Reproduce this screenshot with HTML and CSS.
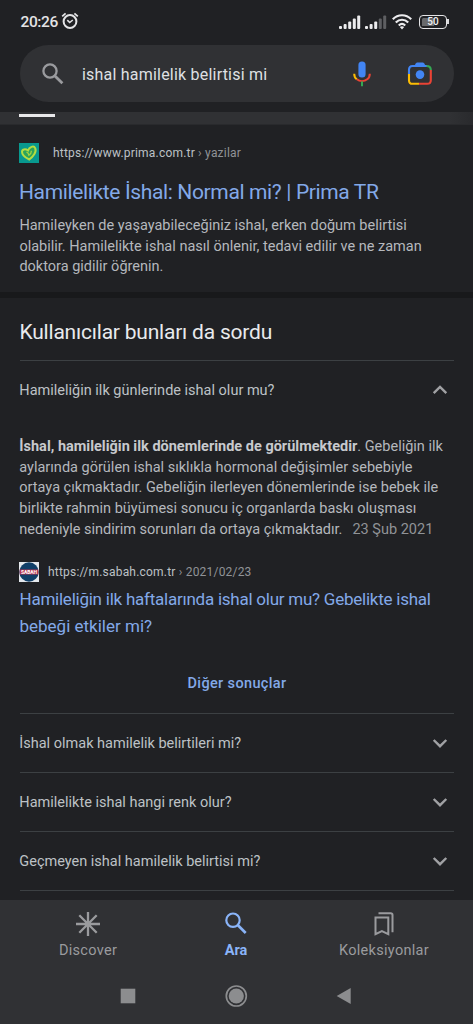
FILE: index.html
```html
<!DOCTYPE html>
<html lang="tr">
<head>
<meta charset="utf-8">
<meta name="viewport" content="width=device-width, initial-scale=1">
<title>ishal hamilelik belirtisi mi</title>
<link rel="stylesheet" href="styles.css">
</head>
<body>
<div class="screen">
  <header class="status">
    <span class="clock">20:26</span>
    <svg class="alarm" width="18" height="18" viewBox="0 0 18 18" fill="none" stroke="#e4e4e6"><circle cx="9" cy="9.5" r="6.4" stroke-width="2"/><path d="M1.2 4.4 4.6 1.4M16.8 4.4 13.4 1.4" stroke-width="1.8"/><path d="M6.3 8.2 8.7 10.5 11.8 8" stroke-width="1.6"/></svg>
    <div class="indicators">
      <svg width="22" height="14" viewBox="0 0 22 14" fill="#ececee"><rect x="0" y="11" width="3" height="3" rx="1"/><rect x="4.6" y="9" width="3" height="5" rx="1"/><rect x="9.2" y="6.5" width="3" height="7.5" rx="1"/><rect x="13.8" y="3.5" width="3" height="10.5" rx="1"/><rect x="18.2" y="0.5" width="3" height="13.5" rx="1"/></svg>
      <svg width="22" height="14" viewBox="0 0 22 14" fill="#ececee"><rect x="0" y="11" width="3" height="3" rx="1"/><rect x="4.6" y="9" width="3" height="5" rx="1"/><rect x="9.2" y="6.5" width="3" height="7.5" rx="1"/><rect x="13.8" y="3.5" width="3" height="10.5" rx="1" fill="#5e5f62"/><rect x="18.2" y="0.5" width="3" height="13.5" rx="1" fill="#5e5f62"/></svg>
      <svg class="wifi" width="20" height="16" viewBox="0 0 20 16" fill="none" stroke="#ececee" stroke-width="2.2"><path d="M.8 5.3C6-.1 14-.1 19.2 5.3M3.8 8.5c3.6-3.7 8.8-3.7 12.4 0M6.8 11.5c1.9-1.9 4.5-1.9 6.4 0"/><path d="M10 15.5 7.8 13.1q2.2-1.7 4.4 0z" fill="#ececee" stroke="none"/></svg>
      <div class="battery"><span class="battery-body">50</span><i class="battery-tip"></i></div>
    </div>
  </header>

  <div class="search">
    <svg class="lens" width="22" height="22" viewBox="0 0 22 22" fill="none" stroke="#9a9b9e" stroke-width="2.3"><circle cx="8" cy="8" r="6.6"/><path d="M12.7 12.7 20.4 20.2" stroke-width="2.8"/></svg>
    <span class="query">ishal hamilelik belirtisi mi</span>
    <svg class="mic" width="18" height="26" viewBox="0 0 18 26" fill="none"><rect x="5.4" y="0.5" width="7.2" height="16" rx="3.5" fill="#4285f4"/><path d="M1.2 12.7c0 2.4 1 4.4 2.6 5.6" stroke="#fbbc04" stroke-width="2"/><path d="M3.8 18.3c3 2.4 7.4 2.4 10.4 0 1.6-1.2 2.6-3.2 2.6-5.6" stroke="#ea4335" stroke-width="2"/><path d="M9 20.4v4.8" stroke="#34a853" stroke-width="2"/></svg>
    <svg class="camera" width="26" height="24" viewBox="0 0 26 24" fill="none" stroke-width="2.1"><path d="M2 12V7.5Q2 4 5.5 4H20" stroke="#4285f4"/><path d="M7.5 3.5 9 1.2Q9.4.6 10.2.6h5.6q.8 0 1.2.6l1.5 2.3v1h-11z" fill="#4285f4"/><path d="M19.5 4q4.3 0 4.3 4" stroke="#34a853"/><path d="M23.8 8v10.2q0 3.6-3.6 3.6H12" stroke="#ea4335"/><path d="M12 21.8H5.5Q2 21.8 2 18.2V12" stroke="#fbbc04"/><circle cx="13" cy="12.6" r="4.3" fill="#4285f4"/></svg>
  </div>

  <div class="tabs"><i class="tab-line"></i></div>

  <main>
    <section class="result">
      <div class="source">
        <svg width="20" height="20" viewBox="0 0 20 20" fill="none"><rect width="20" height="20" fill="#08998f"/><path d="M10.3 16.5C6.2 14.5 2.9 12.3 3 8.7 3.1 6 6.6 5.7 9 7.5 10.2 4.1 14.8 1.9 16.3 5.3 17.8 9 14 13.8 10.3 16.5Z" stroke="#b4dc42" stroke-width="2" fill="#2ca45b"/><path d="M7.4 9.2q2 .3 2.5 3 2.5-1.4 2.5-4.4" stroke="#a5d340" stroke-width="1.3"/></svg>
        <span class="url prima">https://www.prima.com.tr <span>› yazilar</span></span>
      </div>
      <h2 class="title">Hamilelikte İshal: Normal mi? | Prima TR</h2>
      <p class="text snippet">Hamileyken de yaşayabileceğiniz ishal, erken doğum belirtisi<br>olabilir. Hamilelikte ishal nasıl önlenir, tedavi edilir ve ne zaman<br>doktora gidilir öğrenin.</p>
    </section>

    <section class="asked">
      <h2 class="heading">Kullanıcılar bunları da sordu</h2>
      <div class="question first"><span>Hamileliğin ilk günlerinde ishal olur mu?</span><svg width="16" height="12" viewBox="0 0 16 12"><path d="M1.7 9.2 8 3l6.3 6.2"/></svg></div>
      <p class="text answer"><b>İshal, hamileliğin ilk dönemlerinde de görülmektedir</b>. Gebeliğin ilk<br>aylarında görülen ishal sıklıkla hormonal değişimler sebebiyle<br>ortaya çıkmaktadır. Gebeliğin ilerleyen dönemlerinde ise bebek ile<br>birlikte rahmin büyümesi sonucu iç organlarda baskı oluşması<br>nedeniyle sindirim sorunları da ortaya çıkmaktadır.<span class="date">23 Şub 2021</span></p>
      <div class="source sabah-row">
        <svg width="20" height="20" viewBox="0 0 20 20"><rect width="20" height="20" fill="#e4e8ec"/><circle cx="10" cy="10" r="9.7" fill="#103f68"/><path d="M.7 7.5h18.6v5H.7z" fill="#b53450"/><text x="10" y="12.1" text-anchor="middle" class="sabah" textLength="16">SABAH</text></svg>
        <span class="url sabah-url">https://m.sabah.com.tr <span>› 2021/02/23</span></span>
      </div>
      <h3 class="subtitle">Hamileliğin ilk haftalarında ishal olur mu? Gebelikte ishal<br><span class="subtitle-end">bebeği etkiler mi?</span></h3>
      <div class="more">Diğer sonuçlar</div>
      <div class="question"><span>İshal olmak hamilelik belirtileri mi?</span><svg width="16" height="12" viewBox="0 0 16 12"><path d="M1.7 3 8 9.2 14.3 3"/></svg></div>
      <div class="question"><span>Hamilelikte ishal hangi renk olur?</span><svg width="16" height="12" viewBox="0 0 16 12"><path d="M1.7 3 8 9.2 14.3 3"/></svg></div>
      <div class="question"><span>Geçmeyen ishal hamilelik belirtisi mi?</span><svg width="16" height="12" viewBox="0 0 16 12"><path d="M1.7 3 8 9.2 14.3 3"/></svg></div>
      <div class="last-line"></div>
    </section>
  </main>

  <footer>
    <nav class="nav">
      <div class="item"><svg width="26" height="26" viewBox="0 0 26 26" stroke="#9a9b9e" stroke-width="2.3"><path d="M13 1v24M1 13h24M4.3 4.3l17.4 17.4M21.7 4.3 4.3 21.7"/></svg><span>Discover</span></div>
      <div class="item active"><svg width="26" height="26" viewBox="0 0 26 26" fill="none" stroke="#8ab4f8" stroke-width="2.2"><circle cx="10" cy="9.2" r="6.7"/><path d="m14.7 14 8 8" stroke-width="2.7"/></svg><span>Ara</span></div>
      <div class="item"><svg width="26" height="26" viewBox="0 0 26 26" fill="none" stroke="#9a9b9e" stroke-width="2"><path d="M4.5 6.5h12.8v16.7l-6.4-3-6.4 3z"/><path d="M7.5 2.2h12.2q1.8 0 1.8 1.8v17.2"/></svg><span>Koleksiyonlar</span></div>
    </nav>
    <div class="system">
      <svg width="24" height="24" viewBox="0 0 24 24"><rect x="4.7" y="4.7" width="14.6" height="14.6" fill="#8c8d8f"/></svg>
      <svg width="24" height="24" viewBox="0 0 24 24"><circle cx="12.3" cy="12" r="10" fill="none" stroke="#8c8d8f" stroke-width="1.7"/><circle cx="12.3" cy="12" r="7.6" fill="#8c8d8f"/></svg>
      <svg width="24" height="24" viewBox="0 0 24 24"><path d="M4.7 12 18.7 4v16z" fill="#8c8d8f"/></svg>
    </div>
  </footer>
</div>
</body>
</html>
```
FILE: styles.css
```css
* { box-sizing: border-box; }
body { margin: 0; background: #202124; color: #bdc1c6; font-family: Roboto, "Liberation Sans", sans-serif; }
svg { display: block; flex: none; }
h2, h3, p { margin: 0; font-weight: 400; white-space: nowrap; }
.screen { width: 473px; height: 1024px; display: flex; flex-direction: column; overflow: hidden; }

.status { height: 45px; padding: 0 24px 2px 20.5px; display: flex; align-items: center; flex: none; }
.clock { width: 38px; font-size: 15.5px; letter-spacing: -.4px; font-weight: 500; color: #e4e4e6; }
.alarm { margin-left: 2px; margin-top: -1px; }
.indicators { margin-left: auto; display: flex; align-items: center; gap: 4px; }
.wifi { margin-left: 1px; }
.battery { display: flex; align-items: center; margin-left: 3px; }
.battery-body { width: 28px; height: 14px; border: 1.6px solid #e4e4e6; border-radius: 4px; background: linear-gradient(90deg, #68696b 0 50%, transparent 50%) content-box; padding: 1.5px; font-size: 10px; line-height: 10px; font-weight: 500; text-align: center; color: #f0f0f2; }
.battery-tip { width: 2px; height: 5px; background: #dcdcde; }

.search { height: 57px; margin: 0 19px 0 20px; padding: 0 21px 0 22px; border-radius: 29px; background: #303134; display: flex; align-items: center; flex: none; }
.query { margin-left: 18px; padding-top: 1px; font-size: 16px; letter-spacing: .21px; color: #dfe0e3; white-space: nowrap; }
.mic { margin-left: auto; }
.camera { margin-left: 36px; }
.tabs { height: 13px; margin-top: 10px; padding: 2px 0 0 19px; background: linear-gradient(90deg, #303134 0 450px, #292a2d 473px); border-bottom: 1px solid #292a2d; flex: none; }
.tab-line { display: block; width: 36px; height: 2.5px; background: #e8e8ea; }

main { flex: 1; min-height: 0; overflow: hidden; }
.result { height: 173px; padding: 18px 19px 0; border-bottom: 6px solid #18191b; }
.source { display: flex; align-items: center; height: 20px; }
.url { font-size: 12px; letter-spacing: .2px; color: #bdc1c6; white-space: nowrap; }
.url span { color: #909397; }
.prima { margin-left: 14px; }
.title { margin-top: 15px; font-size: 21px; line-height: 28px; letter-spacing: -.36px; color: #83a9e8; }
.text { font-size: 14.5px; line-height: 20.7px; color: #b5b8bd; }
.snippet { margin-top: 10px; padding-left: .4px; }
.asked { padding: 0 19px 0 20px; }
.heading { height: 62px; padding-top: 19px; margin-left: -.5px; font-size: 21px; line-height: 30px; letter-spacing: -.21px; color: #e8eaed; }
.question { height: 59px; border-top: 1px solid #3c4043; padding: 0 6px 0 0; display: flex; align-items: center; justify-content: space-between; font-size: 14.5px; color: #bdc1c6; white-space: nowrap; }
.question span { padding-top: 1px; margin-left: -.7px; }
.question path { fill: none; stroke: #a0a1a4; stroke-width: 2.4; }
.answer { margin-top: 18px; margin-left: -.7px; }
.answer b { font-weight: 700; color: #c7c9cd; }
.date { margin-left: 10px; color: #909397; }
.sabah-row { margin-top: 21px; margin-left: -1px; }
.sabah { font: 700 5px Roboto, sans-serif; fill: #fff; }
.sabah-url { margin-left: 9px; }
.subtitle { margin-top: 4px; margin-left: -.5px; font-size: 17px; line-height: 27px; letter-spacing: -.24px; color: #83a9e8; }
.subtitle-end { letter-spacing: 0; }
.more { height: 73px; padding-top: 34px; line-height: 20px; font-size: 14.5px; letter-spacing: .36px; font-weight: 500; text-align: center; color: #83a9e8; }
.last-line { border-top: 1px solid #3c4043; }

footer { height: 124px; background: #303134; flex: none; }
.nav { display: grid; grid-template-columns: 148px 148px 148px; padding: 11px 0 0 14px; height: 76px; }
.item { display: flex; flex-direction: column; align-items: center; color: #9a9b9e; font-size: 14.5px; letter-spacing: .3px; line-height: 20px; gap: 4px; }
.active { color: #8ab4f8; font-weight: 700; letter-spacing: 0; }
.system { display: flex; justify-content: space-between; padding: 8px 117px 0 116px; }
```
